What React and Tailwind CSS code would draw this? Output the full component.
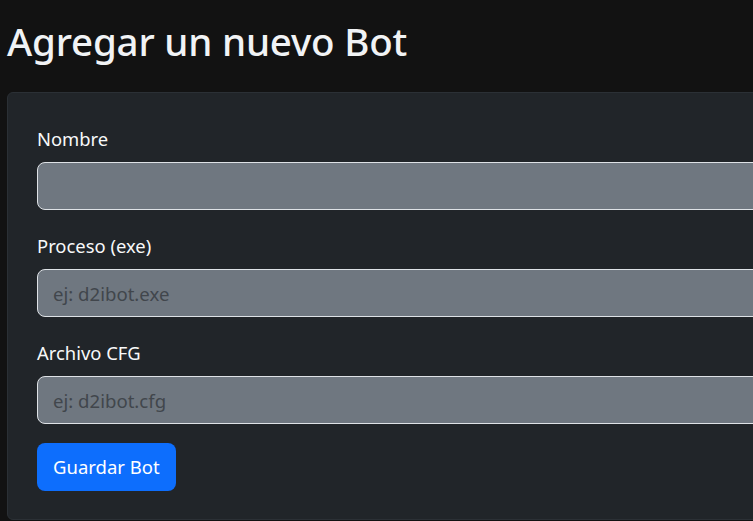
export default function App() {
    const fields = [
        { id: 'nombre', label: 'Nombre', placeholder: '' },
        { id: 'proceso', label: 'Proceso (exe)', placeholder: 'ej: d2ibot.exe' },
        { id: 'cfg', label: 'Archivo CFG', placeholder: 'ej: d2ibot.cfg' },
    ];

    return (
        <div className="h-[521px] w-[753px] overflow-hidden bg-[#121212] text-[#f1f3f5]" style={{ fontFamily: '"Noto Sans", "Open Sans", sans-serif' }}>
            <h1 className="pl-[7px] pt-[18px] text-[38.5px] font-medium leading-[1.2] tracking-[-0.2px]">Agregar un nuevo Bot</h1>

            <div className="ml-[7px] mt-[28px] w-[900px] rounded-[6px] border border-[#2b3035] bg-[#212529] pb-[28px] pl-[29px] pt-[34px]">
                <form onSubmit={(e) => e.preventDefault()}>
                    {fields.map((f, i) => (
                        <div key={f.id} className={i === fields.length - 1 ? 'mb-[19px]' : 'mb-[24px]'}>
                            <label htmlFor={f.id} className="mb-[8px] block text-[18.4px] leading-[24px] pb-[3px] text-[#f8f9fa]">{f.label}</label>
                            <input
                                id={f.id}
                                type="text"
                                placeholder={f.placeholder}
                                className="block h-[48px] w-full rounded-[8px] border border-[#dee2e6] bg-[#6f7780] px-[15px] text-[18.6px] text-[#f8f9fa] placeholder:text-[#41464c] focus:outline-none"
                            />
                        </div>
                    ))}
                    <button type="submit" className="h-[48px] rounded-[8px] bg-[#0d6efd] px-[16px] text-[18.5px] text-white">Guardar Bot</button>
                </form>
            </div>
        </div>
    );
}
